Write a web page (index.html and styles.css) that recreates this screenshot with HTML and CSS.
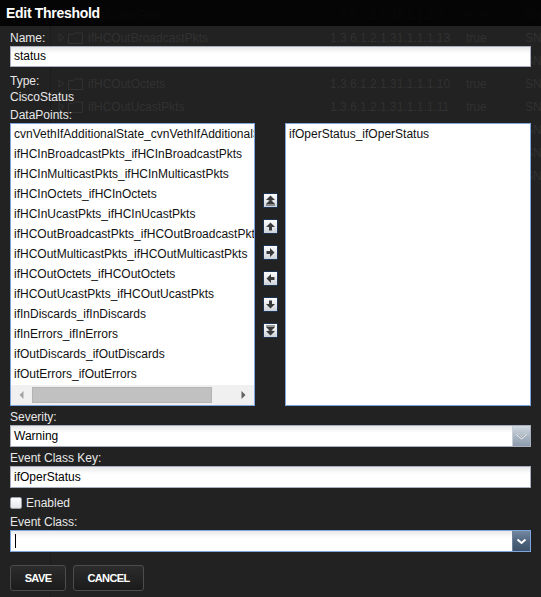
FILE: index.html
```html
<!DOCTYPE html>
<html lang="en">
<head>
<meta charset="utf-8">
<title>Edit Threshold</title>
<link rel="stylesheet" href="styles.css">
</head>
<body>
<div class="grid" aria-hidden="true">
  <div class="grid-line"></div>
  <div class="grid-row">
    <span></span><span></span><span></span>
    <span class="g-name shift">ifHCInUcastPkts</span><span>1.3.6.1.2.1.31.1.1.1.7</span><span>true</span><span>SN</span>
  </div>
  <div class="grid-row">
    <span></span>
    <span class="g-tri"><svg width="7" height="9" viewBox="0 0 7 9"><path d="M1 1 L6 4.5 L1 8 Z" fill="none" stroke="currentColor"/></svg></span>
    <span class="g-fold"><svg width="15" height="12" viewBox="0 0 15 12"><path d="M0.5 2.5 H5 L6.5 1 H14.5 V11.5 H0.5 Z" fill="none" stroke="currentColor"/></svg></span>
    <span class="g-name">ifHCOutBroadcastPkts</span><span>1.3.6.1.2.1.31.1.1.1.13</span><span>true</span><span>SN</span>
  </div>
  <div class="grid-row">
    <span></span><span></span><span></span><span></span><span></span><span></span><span>SN</span>
  </div>
  <div class="grid-row">
    <span></span>
    <span class="g-tri"><svg width="7" height="9" viewBox="0 0 7 9"><path d="M1 1 L6 4.5 L1 8 Z" fill="none" stroke="currentColor"/></svg></span>
    <span class="g-fold"><svg width="15" height="12" viewBox="0 0 15 12"><path d="M0.5 2.5 H5 L6.5 1 H14.5 V11.5 H0.5 Z" fill="none" stroke="currentColor"/></svg></span>
    <span class="g-name">ifHCOutOctets</span><span>1.3.6.1.2.1.31.1.1.1.10</span><span>true</span><span>SN</span>
  </div>
  <div class="grid-row">
    <span></span>
    <span class="g-tri"><svg width="7" height="9" viewBox="0 0 7 9"><path d="M1 1 L6 4.5 L1 8 Z" fill="none" stroke="currentColor"/></svg></span>
    <span class="g-fold"><svg width="15" height="12" viewBox="0 0 15 12"><path d="M0.5 2.5 H5 L6.5 1 H14.5 V11.5 H0.5 Z" fill="none" stroke="currentColor"/></svg></span>
    <span class="g-name">ifHCOutUcastPkts</span><span>1.3.6.1.2.1.31.1.1.1.11</span><span>true</span><span>SN</span>
  </div>
  <div class="grid-row">
    <span></span><span></span><span></span><span></span><span></span><span></span><span>SN</span>
  </div>
  <div class="grid-row">
    <span></span><span></span><span></span><span></span><span></span><span></span><span>SN</span>
  </div>
  <div class="grid-row">
    <span></span><span></span><span></span><span></span><span></span><span></span><span>SN</span>
  </div>
</div>

<div class="dialog">
  <div class="titlebar">Edit Threshold</div>
  <div class="form">
    <div class="label l-name">Name:</div>
    <div class="textfield tf-name">status</div>

    <div class="label l-type">Type:</div>
    <div class="label">CiscoStatus</div>

    <div class="label l-dp">DataPoints:</div>
    <div class="lists">
      <div class="listbox">
        <div class="items">
          <div class="item">cvnVethIfAdditionalState_cvnVethIfAdditionalState</div>
          <div class="item">ifHCInBroadcastPkts_ifHCInBroadcastPkts</div>
          <div class="item">ifHCInMulticastPkts_ifHCInMulticastPkts</div>
          <div class="item">ifHCInOctets_ifHCInOctets</div>
          <div class="item">ifHCInUcastPkts_ifHCInUcastPkts</div>
          <div class="item">ifHCOutBroadcastPkts_ifHCOutBroadcastPkts</div>
          <div class="item">ifHCOutMulticastPkts_ifHCOutMulticastPkts</div>
          <div class="item">ifHCOutOctets_ifHCOutOctets</div>
          <div class="item">ifHCOutUcastPkts_ifHCOutUcastPkts</div>
          <div class="item">ifInDiscards_ifInDiscards</div>
          <div class="item">ifInErrors_ifInErrors</div>
          <div class="item">ifOutDiscards_ifOutDiscards</div>
          <div class="item">ifOutErrors_ifOutErrors</div>
        </div>
        <div class="hscroll">
          <span class="sarrow"><svg width="5" height="8" viewBox="0 0 5 8"><path d="M4.5 0 V8 L0.5 4 Z" fill="#a3a3a3"/></svg></span>
          <span class="sthumb"></span>
          <span class="sarrow sarrow-r"><svg width="5" height="8" viewBox="0 0 5 8"><path d="M0.5 0 V8 L4.5 4 Z" fill="#606060"/></svg></span>
        </div>
      </div>

      <div class="movers">
        <button class="mv" title="Move to top"><svg width="11" height="11" viewBox="0 0 11 11"><path d="M5.5 0.5 L10 5 H7.5 V5.5 H3.5 V5 H1 Z" fill="#3a3a3a"/><path d="M5.5 4.5 L10 9 H1 Z" fill="#3a3a3a"/><rect x="1" y="9.5" width="9" height="1" fill="#3a3a3a"/></svg></button>
        <button class="mv" title="Move up"><svg width="11" height="11" viewBox="0 0 11 11"><path d="M5.5 1.5 L10 6 H7 V9.5 H4 V6 H1 Z" fill="#3a3a3a"/></svg></button>
        <button class="mv" title="Add"><svg width="11" height="11" viewBox="0 0 11 11"><path d="M9.5 5.5 L5 10 V7 H1.5 V4 H5 V1 Z" fill="#3a3a3a"/></svg></button>
        <button class="mv" title="Remove"><svg width="11" height="11" viewBox="0 0 11 11"><path d="M1.5 5.5 L6 1 V4 H9.5 V7 H6 V10 Z" fill="#3a3a3a"/></svg></button>
        <button class="mv" title="Move down"><svg width="11" height="11" viewBox="0 0 11 11"><path d="M5.5 9.5 L1 5 H4 V1.5 H7 V5 H10 Z" fill="#3a3a3a"/></svg></button>
        <button class="mv" title="Move to bottom"><svg width="11" height="11" viewBox="0 0 11 11"><rect x="1" y="0.5" width="9" height="1" fill="#3a3a3a"/><path d="M5.5 6.5 L1 2 H10 Z" fill="#3a3a3a"/><path d="M5.5 10.5 L1 6 H3.5 V5.5 H7.5 V6 H10 Z" fill="#3a3a3a"/></svg></button>
      </div>

      <div class="listbox listbox-r">
        <div class="items">
          <div class="item">ifOperStatus_ifOperStatus</div>
        </div>
      </div>
    </div>

    <div class="label l-sev">Severity:</div>
    <div class="combo">
      <div class="combo-field">Warning</div>
      <div class="combo-trigger"><svg width="11" height="7" viewBox="0 0 11 7"><path d="M1 1 L5.5 5 L10 1" fill="none" stroke="#f4f6f8" stroke-width="2.2"/><path d="M1.5 1.2 L5.5 4.8 L9.5 1.2" fill="none" stroke="#6a7583" stroke-width="1"/></svg></div>
    </div>

    <div class="label l-eck">Event Class Key:</div>
    <div class="textfield">ifOperStatus</div>

    <label class="check-row"><span class="checkbox"></span>Enabled</label>

    <div class="label l-ec">Event Class:</div>
    <div class="combo combo-focus">
      <div class="combo-field"><span class="caret"></span></div>
      <div class="combo-trigger trigger-dark"><svg width="11" height="7" viewBox="0 0 11 7"><path d="M1.5 1.5 L5.5 5 L9.5 1.5" fill="none" stroke="#ffffff" stroke-width="2"/></svg></div>
    </div>

    <div class="actions">
      <button class="btn btn-save">SAVE</button>
      <button class="btn btn-cancel">CANCEL</button>
    </div>
  </div>
</div>
</body>
</html>
```

FILE: styles.css
```css
html, body {
  margin: 0;
  padding: 0;
}

body {
  width: 541px;
  height: 597px;
  overflow: hidden;
  position: relative;
  background: #222222;
  font-family: "Liberation Sans", Arial, sans-serif;
  font-size: 12px;
  color: #e8e8e8;
}

/* faint grid behind the dialog */
.grid {
  position: absolute;
  top: 3px;
  left: 0;
  width: 541px;
  color: #313131;
  z-index: 0;
}

.grid-line {
  position: absolute;
  top: -3px;
  left: 50px;
  width: 1px;
  height: 597px;
  background: #1c1c1c;
}

.grid-row {
  display: grid;
  grid-template-columns: 58px 10px 20px 242px 136px 59px 16px;
  height: 23px;
  align-items: center;
  white-space: nowrap;
  overflow: hidden;
}

.g-tri, .g-fold {
  display: flex;
  align-items: center;
}

.g-name.shift {
  margin-left: -14px;
}

.dialog {
  position: relative;
  z-index: 1;
  width: 541px;
}

.titlebar {
  height: 26px;
  line-height: 26px;
  padding-left: 6px;
  background: rgba(0, 0, 0, 0.84);
  color: #ffffff;
  font-weight: bold;
  font-size: 14px;
  letter-spacing: -0.3px;
}

.form {
  padding: 5px 10px 0 10px;
}

.label {
  line-height: 16px;
  color: #e8e8e8;
}

.l-name { line-height: 15px; }
.l-type { margin-top: 6px; }
.l-dp { margin-top: 3px; line-height: 15px; }
.l-sev { margin-top: 4px; line-height: 15px; }
.l-eck { margin-top: 4px; line-height: 15px; }
.l-ec { margin-top: 5px; line-height: 15px; }

.textfield {
  box-sizing: border-box;
  height: 22px;
  line-height: 20px;
  padding-left: 3px;
  border: 1px solid #a8aebd;
  background: linear-gradient(#e9e9e9, #ffffff 35%, #ffffff);
  color: #000;
}

.tf-name { height: 21px; line-height: 19px; }

/* dual list */
.lists {
  display: flex;
  height: 283px;
}

.listbox {
  box-sizing: border-box;
  width: 245px;
  height: 283px;
  border: 1px solid #7ea6dd;
  background: #ffffff;
  display: flex;
  flex-direction: column;
  overflow: hidden;
}

.listbox-r {
  width: 246px;
}

.items {
  flex: 1;
  overflow: hidden;
  padding-left: 3px;
}

.item {
  height: 20px;
  line-height: 20px;
  white-space: nowrap;
  color: #111111;
}

.hscroll {
  height: 20px;
  display: flex;
  align-items: center;
  background: #f0f0f0;
}

.sarrow {
  width: 21px;
  display: flex;
  justify-content: center;
  align-items: center;
}

.sthumb {
  width: 180px;
  height: 16px;
  box-sizing: border-box;
  background: #c1c1c1;
  border: 1px solid #b4b4b4;
}

.sarrow-r {
  margin-left: auto;
}

.movers {
  width: 30px;
  display: flex;
  flex-direction: column;
  align-items: center;
  justify-content: center;
  gap: 11px;
  padding-top: 1px;
}

.mv {
  box-sizing: border-box;
  width: 15px;
  height: 15px;
  padding: 0;
  margin: 0;
  border: 1px solid #1c3556;
  border-radius: 1px;
  background: linear-gradient(#fbfbfb, #e3e6ea 60%, #cbd1d8);
  display: flex;
  align-items: center;
  justify-content: center;
}

/* combos */
.combo {
  box-sizing: border-box;
  height: 22px;
  display: flex;
  border: 1px solid #a8aebd;
  background: linear-gradient(#e9e9e9, #ffffff 35%, #ffffff);
}

.combo-focus {
  border-color: #7ea6dd;
}

.combo-field {
  flex: 1;
  line-height: 20px;
  padding-left: 3px;
  color: #000;
  display: flex;
  align-items: center;
}

.caret {
  display: block;
  width: 1px;
  height: 14px;
  margin-left: 1px;
  background: #000;
}

.combo-trigger {
  width: 17px;
  border-left: 1px solid #c7ced6;
  background: linear-gradient(#d3dae2, #a7b4c1 55%, #8d9cae);
  display: flex;
  align-items: center;
  justify-content: center;
}

.trigger-dark {
  border-left-color: #6e8196;
  background: linear-gradient(#7489a0, #4d637c 55%, #3c526b);
}

.check-row {
  display: flex;
  align-items: center;
  gap: 4px;
  height: 14px;
  line-height: 14px;
  margin-top: 8px;
  color: #e8e8e8;
}

.checkbox {
  box-sizing: border-box;
  width: 12px;
  height: 12px;
  border: 1px solid #9aa0a8;
  border-radius: 2px;
  background: linear-gradient(#ffffff, #e4e6ea);
}

.actions {
  display: flex;
  gap: 7px;
  margin-top: 13px;
}

.btn {
  box-sizing: border-box;
  height: 26px;
  padding: 0;
  border: 1px solid #4c4c4c;
  border-radius: 3px;
  background: linear-gradient(#2c2c2c, #1b1b1b);
  color: #ffffff;
  font-family: "Liberation Sans", Arial, sans-serif;
  font-weight: bold;
  font-size: 11px;
  letter-spacing: -0.6px;
}

.btn-save { width: 56px; }
.btn-cancel { width: 71px; }
```
